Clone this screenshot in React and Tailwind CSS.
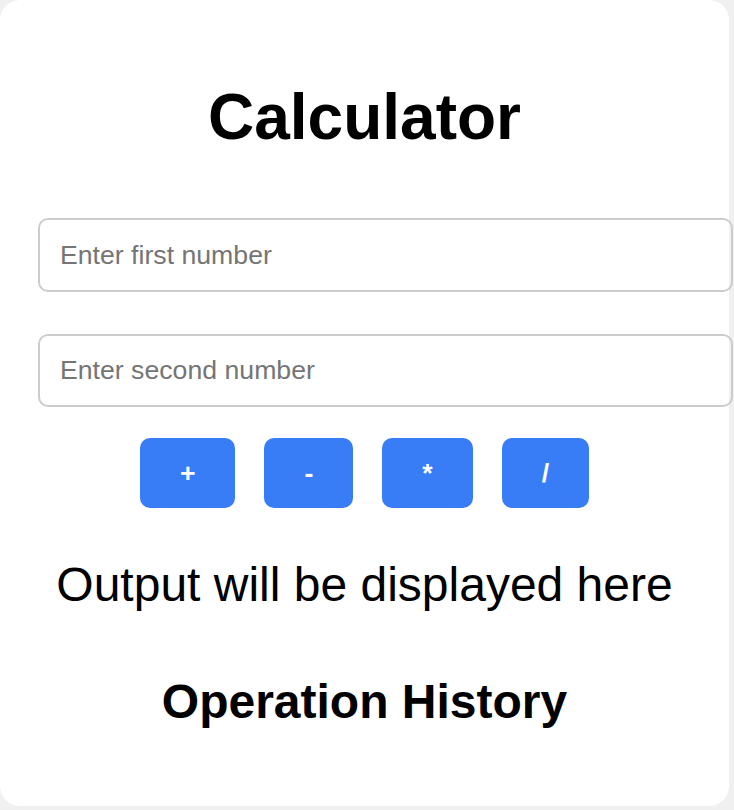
import { useState } from "react";

export default function App() {
  const [a, setA] = useState("");
  const [b, setB] = useState("");
  const [output, setOutput] = useState("Output will be displayed here");

  const calc = (op) => {
    const x = parseFloat(a);
    const y = parseFloat(b);
    if (isNaN(x) || isNaN(y)) return;
    let r = 0;
    if (op === "+") r = x + y;
    if (op === "-") r = x - y;
    if (op === "*") r = x * y;
    if (op === "/") r = x / y;
    setOutput(`Result: ${r}`);
  };

  return (
    <div className="min-h-[810px] bg-[#f0f0f0] font-['Liberation_Sans',Arial,sans-serif] text-black">
      <div className="w-[729px] rounded-[20px] bg-white px-[38px] pt-[80px] pb-[77px]">
        <h1 className="text-center text-[64px] font-bold leading-[74px]">Calculator</h1>

        <input
          type="number"
          placeholder="Enter first number"
          value={a}
          onChange={(e) => setA(e.target.value)}
          className="mt-[64px] block h-[74px] w-[695px] rounded-[10px] border-2 border-[#cccccc] px-[20px] text-[26.67px] outline-none placeholder:text-[#757575]"
        />
        <input
          type="number"
          placeholder="Enter second number"
          value={b}
          onChange={(e) => setB(e.target.value)}
          className="mt-[42px] block h-[73px] w-[695px] rounded-[10px] border-2 border-[#cccccc] px-[20px] text-[26.67px] outline-none placeholder:text-[#757575]"
        />

        <div className="mt-[31px] flex justify-center gap-[29px]">
          {["+", "-", "*", "/"].map((op) => (
            <button
              key={op}
              onClick={() => calc(op)}
              className="h-[70px] rounded-[10px] bg-[#387cf6] px-[40px] text-[26.67px] font-bold text-white"
            >
              {op}
            </button>
          ))}
        </div>

        <p className="mt-[49px] text-center text-[48px] leading-[55px]">{output}</p>

        <h2 className="mt-[62px] text-center text-[48px] font-bold leading-[55px]">Operation History</h2>
      </div>
    </div>
  );
}
